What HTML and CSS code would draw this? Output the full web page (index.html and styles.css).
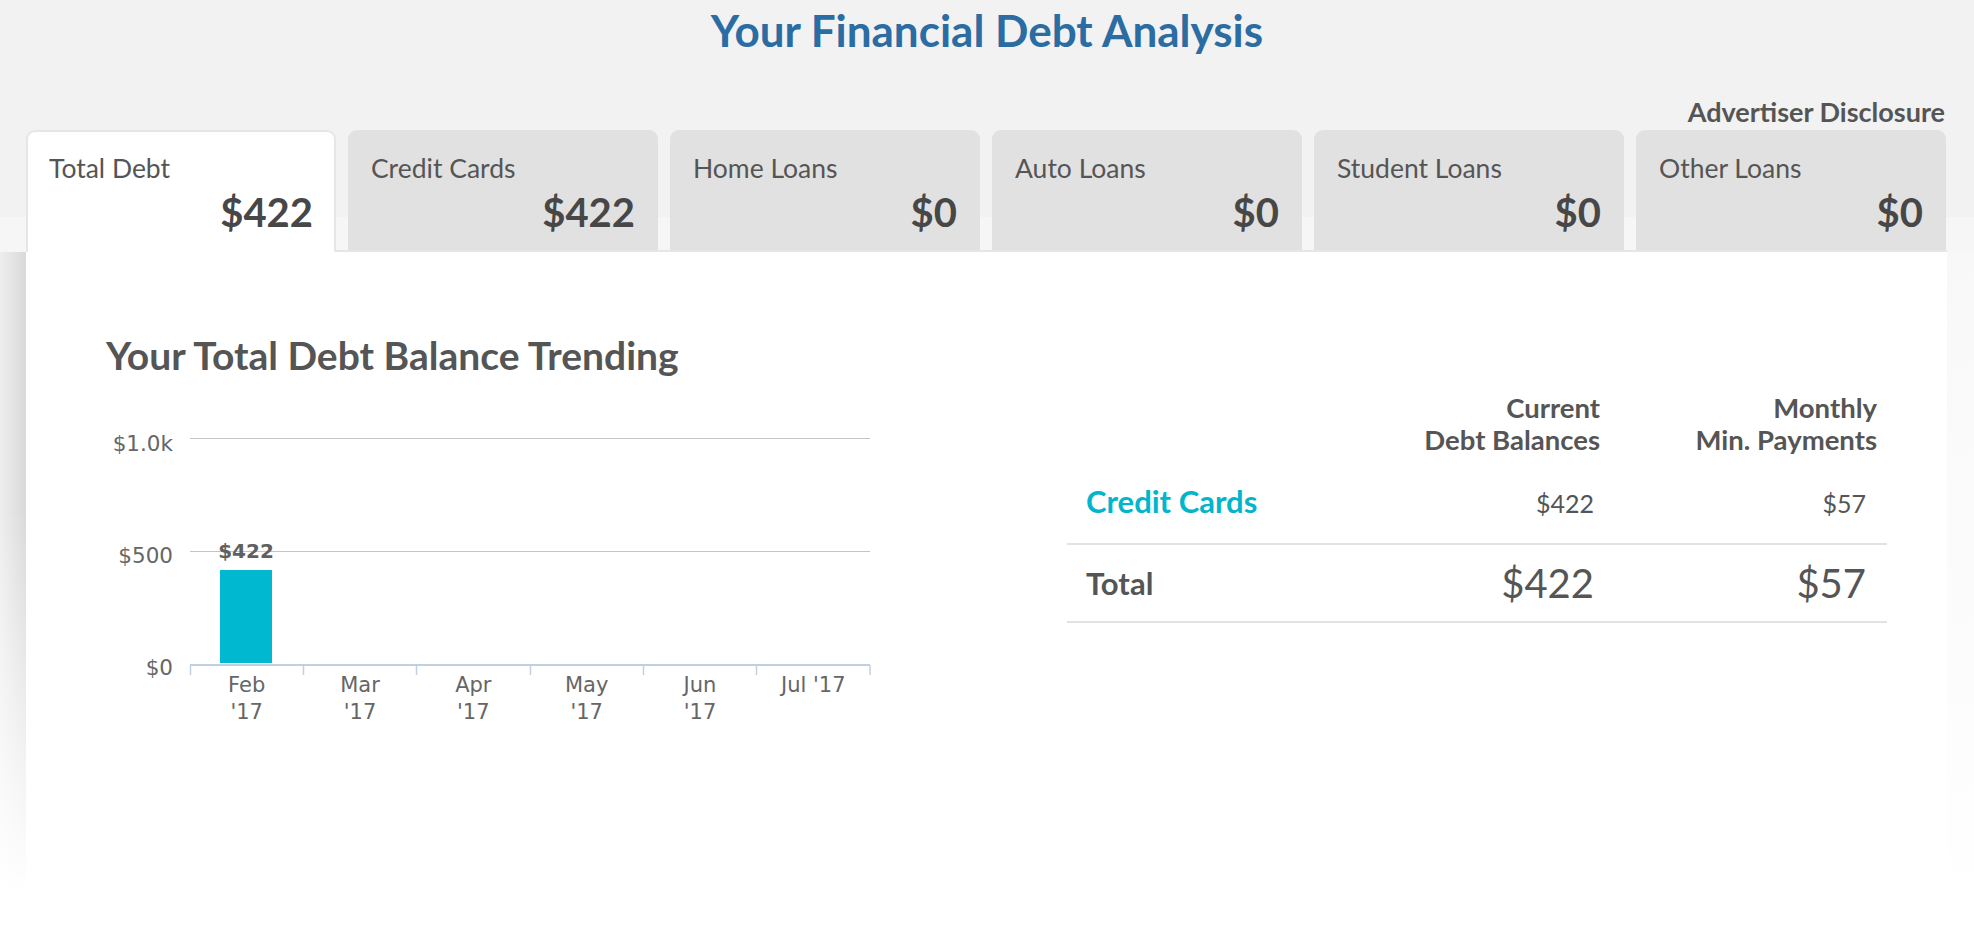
FILE: index.html
```html
<!DOCTYPE html>
<html lang="en">
<head>
<meta charset="utf-8">
<title>Your Financial Debt Analysis</title>
<link rel="stylesheet" href="styles.css">
</head>
<body>
<div class="page">
  <h1 class="title">Your Financial Debt Analysis</h1>
  <div class="disclosure"><a class="disclosure-link" href="#">Advertiser Disclosure</a></div>
  <nav class="tabs">
    <div class="tab active"><div class="tab-label">Total Debt</div><div class="tab-amount">$422</div></div>
    <div class="tab"><div class="tab-label">Credit Cards</div><div class="tab-amount">$422</div></div>
    <div class="tab"><div class="tab-label">Home Loans</div><div class="tab-amount">$0</div></div>
    <div class="tab"><div class="tab-label">Auto Loans</div><div class="tab-amount">$0</div></div>
    <div class="tab"><div class="tab-label">Student Loans</div><div class="tab-amount">$0</div></div>
    <div class="tab"><div class="tab-label">Other Loans</div><div class="tab-amount">$0</div></div>
  </nav>
  <main class="panel">
    <section class="trend">
      <h2 class="trend-title">Your Total Debt Balance Trending</h2>
      <svg class="chart" width="770" height="320" viewBox="0 0 770 320">
        <line class="grid" x1="84" y1="18.5" x2="764" y2="18.5"/>
        <line class="grid" x1="84" y1="131.5" x2="764" y2="131.5"/>
        <rect class="bar" x="114" y="150" width="52" height="93"/>
        <line class="axis" x1="84" y1="245" x2="764" y2="245"/>
        <g class="ticks">
          <line x1="84.5" y1="245" x2="84.5" y2="255"/>
          <line x1="197.5" y1="245" x2="197.5" y2="255"/>
          <line x1="310.5" y1="245" x2="310.5" y2="255"/>
          <line x1="424.5" y1="245" x2="424.5" y2="255"/>
          <line x1="537.5" y1="245" x2="537.5" y2="255"/>
          <line x1="650.5" y1="245" x2="650.5" y2="255"/>
          <line x1="764" y1="245" x2="764" y2="255"/>
        </g>
        <g class="ylabels">
          <text x="67" y="31">$1.0k</text>
          <text x="67" y="143">$500</text>
          <text x="67" y="255">$0</text>
        </g>
        <text class="datalabel" x="140" y="138">$422</text>
        <g class="xlabels">
          <text x="140.7" y="272">Feb</text><text x="140.7" y="299">'17</text>
          <text x="254" y="272">Mar</text><text x="254" y="299">'17</text>
          <text x="367.3" y="272">Apr</text><text x="367.3" y="299">'17</text>
          <text x="480.7" y="272">May</text><text x="480.7" y="299">'17</text>
          <text x="594" y="272">Jun</text><text x="594" y="299">'17</text>
          <text x="707.3" y="272">Jul '17</text>
        </g>
      </svg>
    </section>
    <section class="summary">
      <table class="debt-table">
        <colgroup><col class="c1"><col class="c2"><col class="c3"></colgroup>
        <thead>
          <tr><th></th><th class="num">Current<br>Debt Balances</th><th class="num">Monthly<br>Min. Payments</th></tr>
        </thead>
        <tbody>
          <tr class="row"><td class="name"><a class="cat-link" href="#">Credit Cards</a></td><td class="val v2">$422</td><td class="val v3">$57</td></tr>
          <tr class="total"><td class="name">Total</td><td class="val v2 big">$422</td><td class="val v3 big">$57</td></tr>
        </tbody>
      </table>
    </section>
  </main>
</div>
</body>
</html>
```

FILE: styles.css
```css
* { box-sizing: border-box; }
html, body { margin: 0; padding: 0; }
body {
  font-family: Lato, "Open Sans", sans-serif;
  color: #555;
  min-height: 100vh;
  background:
    linear-gradient(to bottom, rgba(255,255,255,0) 0%, rgba(255,255,255,0) 40%, #fff 100%) 0 252px / 26px 640px no-repeat,
    linear-gradient(to right, #eeeeee, #d9d9d9) 0 252px / 26px 640px no-repeat,
    linear-gradient(#f6f6f6, #f6f6f6) 0 217px / 100% 35px no-repeat,
    linear-gradient(#f8f8f8, #ffffff) 0 252px / 100% 678px no-repeat,
    #f2f2f2;
}
.page {
  display: flex;
  flex-direction: column;
  min-height: 100vh;
}
.title {
  margin: 0;
  padding-top: 8px;
  font-size: 44px;
  line-height: 44px;
  font-weight: 700;
  color: #2b6ca3;
  text-align: center;
}
.disclosure {
  margin-top: 46px;
  padding-right: 29px;
  text-align: right;
  font-size: 27px;
  line-height: 27px;
  height: 27px;
}
.disclosure-link {
  color: #555;
  font-weight: 700;
  text-decoration: none;
}
.tabs {
  margin-top: 5px;
  padding: 0 28px 0 26px;
  display: grid;
  grid-template-columns: repeat(6, 1fr);
  column-gap: 12px;
  align-items: start;
  height: 120px;
}
.tab {
  height: 120px;
  background: #e1e1e1;
  border-radius: 9px 9px 0 0;
  padding: 25px 23px 0;
}
.tab.active {
  position: relative;
  z-index: 1;
  height: 122px;
  background: #fff;
  border: 2px solid #e6e6e6;
  border-bottom: 0;
  padding: 23px 21px 0;
}
.tab-label {
  font-size: 26.5px;
  line-height: 26px;
  color: #555;
}
.tab-amount {
  margin-top: 12px;
  font-size: 40px;
  line-height: 39px;
  font-weight: 700;
  color: #474747;
  text-align: right;
}
.panel {
  flex: 1;
  margin: 0 27px 0 26px;
  background: #fff;
  border-top: 2px solid #e6e6e6;
  display: flex;
  justify-content: space-between;
  align-items: flex-start;
  padding: 0 60px 0 80px;
}
.trend { width: 770px; }
.trend-title {
  margin: 84px 0 0;
  font-size: 39px;
  line-height: 39px;
  font-weight: 700;
  color: #555;
}
.chart {
  display: block;
  margin-top: 45px;
  font-family: "DejaVu Sans", Verdana, sans-serif;
}
.grid { stroke: #c4c4c4; stroke-width: 1; }
.axis { stroke: #c0d0e0; stroke-width: 2; }
.ticks line { stroke: #c0d0e0; stroke-width: 1.5; }
.bar { fill: #00b8cf; }
.ylabels text { font-size: 21.5px; fill: #666; text-anchor: end; }
.xlabels text { font-size: 21px; fill: #666; text-anchor: middle; }
.datalabel { font-size: 20px; font-weight: 700; fill: #606060; text-anchor: middle; }
.summary {
  width: 820px;
  margin-top: 140px;
}
.debt-table {
  width: 820px;
  border-collapse: collapse;
  table-layout: fixed;
}
.c1 { width: 263px; }
.c2 { width: 280px; }
.c3 { width: 277px; }
.debt-table th {
  padding: 0 10px 25px 0;
  font-size: 27.5px;
  line-height: 32px;
  font-weight: 700;
  color: #555;
  text-align: right;
  vertical-align: bottom;
}
.debt-table td {
  padding: 0 0 20px 0;
  vertical-align: baseline;
}
.row td, .total td { border-bottom: 2px solid #e2e2e2; }
.name {
  padding-left: 19px !important;
  font-size: 31px;
  line-height: 40px;
  font-weight: 700;
  color: #555;
}
.cat-link { color: #00b5cc; text-decoration: none; }
.val {
  text-align: right;
  font-size: 25px;
  line-height: 40px;
  color: #555;
}
.v2 { padding-right: 16px !important; }
.v3 { padding-right: 21px !important; }
.total td {
  padding-top: 10px;
  padding-bottom: 10px;
  vertical-align: middle;
}
.total .name { line-height: 40px; font-size: 31px; }
.val.big {
  font-size: 40px;
  line-height: 56px;
  font-weight: 400;
}
```
